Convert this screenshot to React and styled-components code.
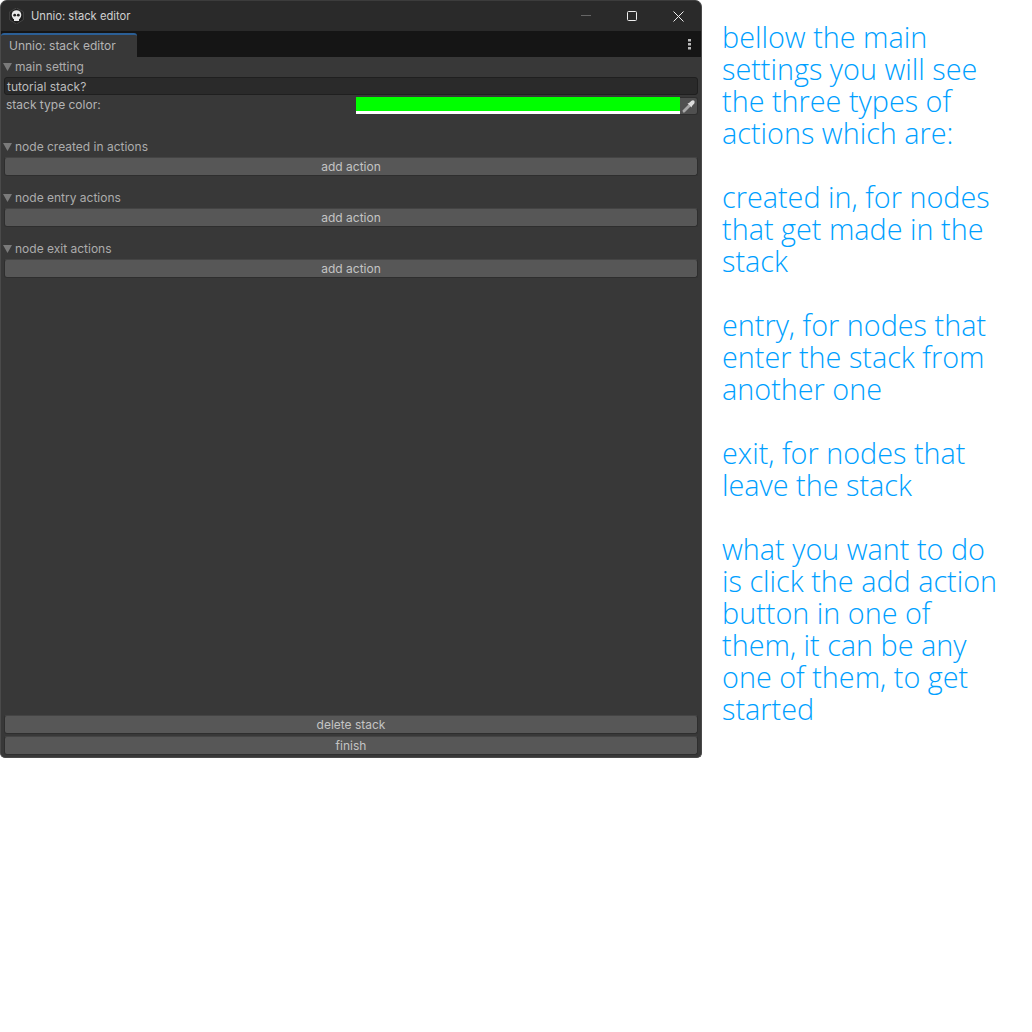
import React from 'react';
import styled, { createGlobalStyle } from 'styled-components';

const Global = createGlobalStyle`
  html, body { margin: 0; padding: 0; background: #fff; }
`;

const Page = styled.div`
  display: flex;
  width: 1032px;
  height: 1032px;
  overflow: hidden;
  align-items: flex-start;
`;

const Win = styled.div`
  box-sizing: border-box;
  width: 702px;
  height: 758px;
  display: flex;
  flex-direction: column;
  background: #383838;
  border: 1px solid #4a4a4a;
  border-top-color: #3c3c3c;
  border-radius: 7px 7px 5px 5px;
  overflow: hidden;
  font-family: Inter, "Noto Sans", sans-serif;
  font-size: 12px;
  color: #b4b4b4;
`;

const TitleBar = styled.div`
  height: 30px;
  flex: none;
  display: flex;
  align-items: center;
  background: #2a2a2a;
  color: #d0d0d0;
  padding-left: 8px;
  font-size: 11.2px;
`;

const TitleText = styled.span`
  margin-left: 7px;
  flex: 1;
`;

const WinBtn = styled.div`
  width: 46px;
  height: 30px;
  display: flex;
  align-items: center;
  justify-content: center;
`;

const TabBar = styled.div`
  height: 26px;
  flex: none;
  display: flex;
  background: #151515;
`;

const Tab = styled.div`
  box-sizing: border-box;
  margin-top: 2px;
  width: 136px;
  height: 24px;
  background: #383838;
  border-top: 2px solid #2b5f96;
  border-radius: 3px 3px 0 0;
  padding: 3px 0 0 8px;
`;

const TabMenu = styled.div`
  margin-left: auto;
  width: 24px;
  display: flex;
  align-items: center;
  justify-content: center;
`;

const Body = styled.div`
  flex: 1;
  display: flex;
  flex-direction: column;
  padding: 0 3px 2px 3px;
  min-height: 0;
`;

const Header = styled.div`
  height: 20px;
  display: flex;
  align-items: center;
  gap: 3px;
  margin-left: -1px;
  margin-top: ${p => p.$top || 0}px;
  padding-bottom: 2px;
  box-sizing: border-box;
  color: #acacac;
`;

const Input = styled.div`
  box-sizing: border-box;
  height: 18px;
  background: #2a2a2a;
  border: 1px solid #1f1f1f;
  border-radius: 3px;
  padding-left: 2px;
  line-height: 18px;
  color: #bcbcbc;
`;

const ColorRow = styled.div`
  height: 18px;
  margin-top: 2px;
  display: flex;
  padding-left: 2px;
`;

const ColorLabel = styled.div`
  width: 350px;
  line-height: 15px;
`;

const Swatch = styled.div`
  width: 325px;
  height: 17px;
  background: #00ff00;
  border-bottom: 3px solid #fff;
  box-sizing: border-box;
`;

const Picker = styled.div`
  width: 18px;
  height: 18px;
  box-sizing: border-box;
  background: #505050;
  border: 1px solid #2e2e2e;
  border-left: 0;
  border-radius: 0 3px 3px 0;
  display: flex;
  align-items: center;
  justify-content: center;
`;

const Button = styled.div`
  box-sizing: border-box;
  flex: none;
  height: 19px;
  margin-top: ${p => p.$top || 0}px;
  background: #575757;
  border: 1px solid #2e2e2e;
  border-top-color: #444;
  border-radius: 3px;
  text-align: center;
  line-height: 17px;
  color: #c4c4c4;
`;

const BottomButton = styled(Button)`
  margin-top: auto;
`;

const Side = styled.div`
  padding: 21px 0 0 20px;
  font-family: "Open Sans", Lato, sans-serif;
  font-weight: 300;
  font-size: 28.8px;
  line-height: 32px;
  color: #009fff;
`;

const Line = styled.div`
  height: 32px;
  white-space: nowrap;
`;

const Arrow = () => (
  <svg width="9" height="9" viewBox="0 0 9 9"><path d="M0 1h9L4.500 9z" fill="#7a7a7a" /></svg>
);

const Skull = () => (
  <svg width="15" height="16" viewBox="0 0 15 16">
    <path d="M7.500 0l6.800 3.800v8L7.500 16 .7 11.800v-8z" fill="#1f1f1f" stroke="#5a5a5a" strokeWidth=".6" />
    <circle cx="7.500" cy="7" r="4.800" fill="#ececec" />
    <rect x="5" y="10" width="5" height="3" rx=".5" fill="#ececec" />
    <circle cx="5.700" cy="7.200" r="1.400" fill="#222" />
    <circle cx="9.300" cy="7.200" r="1.400" fill="#222" />
  </svg>
);

const Dropper = () => (
  <svg width="13" height="13" viewBox="0 0 13 13">
    <path d="M1 12.500L.5 10.500 6.500 4.500 8.500 6.500 2.500 12.500z" fill="#a8a8a8" />
    <path d="M5.500 3.500L7 3 9.500.7Q11 0 12.300.7 13 2 12.300 3.500L10 6 9.500 7.500z" fill="#dcdcdc" />
  </svg>
);

const sideText = [
  'bellow the main', 'settings you will see', 'the three types of', 'actions which are:', '',
  'created in, for nodes', 'that get made in the', 'stack', '',
  'entry, for nodes that', 'enter the stack from', 'another one', '',
  'exit, for nodes that', 'leave the stack', '',
  'what you want to do', 'is click the add action', 'button in one of', 'them, it can be any', 'one of them, to get', 'started',
];

const App = () => {
  return (
    <Page>
      <Global />
      <Win>
        <TitleBar>
          <Skull />
          <TitleText>Unnio: stack editor</TitleText>
          <WinBtn>
            <svg width="10" height="2"><path d="M0 .5h10" stroke="#666" /></svg>
          </WinBtn>
          <WinBtn>
            <svg width="10" height="10"><rect x=".5" y=".5" width="9" height="9" rx="1" fill="none" stroke="#eee" /></svg>
          </WinBtn>
          <WinBtn>
            <svg width="11" height="11"><path d="M.5.5l10 10M10.500.5l-10 10" stroke="#eee" /></svg>
          </WinBtn>
        </TitleBar>
        <TabBar>
          <Tab>Unnio: stack editor</Tab>
          <TabMenu>
            <svg width="3" height="11"><path d="M0 0h3v2.500H0zM0 4h3v2.500H0zM0 8h3v2.500H0z" fill="#bbb" /></svg>
          </TabMenu>
        </TabBar>
        <Body>
          <Header><Arrow />main setting</Header>
          <Input>tutorial stack?</Input>
          <ColorRow>
            <ColorLabel>stack type color:</ColorLabel>
            <Swatch />
            <Picker><Dropper /></Picker>
          </ColorRow>
          <Header $top={22}><Arrow />node created in actions</Header>
          <Button>add action</Button>
          <Header $top={12}><Arrow />node entry actions</Header>
          <Button>add action</Button>
          <Header $top={12}><Arrow />node exit actions</Header>
          <Button>add action</Button>
          <BottomButton>delete stack</BottomButton>
          <Button $top={2}>finish</Button>
        </Body>
      </Win>
      <Side>
        {sideText.map((t, i) => <Line key={i}>{t}</Line>)}
      </Side>
    </Page>
  );
};

export default App;
